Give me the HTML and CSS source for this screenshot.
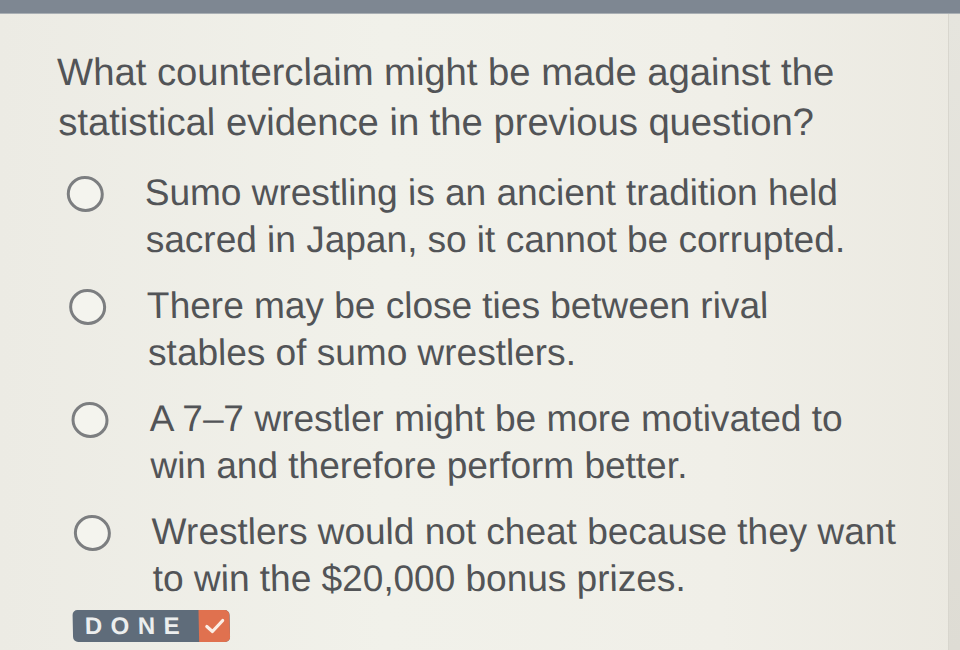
FILE: index.html
```html
<!DOCTYPE html>
<html lang="en">
<head>
<meta charset="utf-8">
<title>Counterclaim question</title>
<link rel="stylesheet" href="styles.css">
</head>
<body>
<div class="topbar"></div>
<div class="screen">
  <main class="content">
    <h1 class="question">What counterclaim might be made against the<br>statistical evidence in the previous question?</h1>
    <ul class="options">
      <li class="option"><span class="radio"></span><span class="label">Sumo wrestling is an ancient tradition held<br>sacred in Japan, so it cannot be corrupted.</span></li>
      <li class="option"><span class="radio"></span><span class="label">There may be close ties between rival<br>stables of sumo wrestlers.</span></li>
      <li class="option"><span class="radio"></span><span class="label">A 7–7 wrestler might be more motivated to<br>win and therefore perform better.</span></li>
      <li class="option"><span class="radio"></span><span class="label">Wrestlers would not cheat because they want<br>to win the $20,000 bonus prizes.</span></li>
    </ul>
    <button class="done"><span class="done-text">DONE</span><span class="check"><svg width="20" height="18" viewBox="0 0 20 18"><path d="M2 9.5 L7.5 14.5 L18 3.5" fill="none" stroke="#fbeee6" stroke-width="3.2" stroke-linecap="round" stroke-linejoin="round"/></svg></span></button>
  </main>
  <div class="edge"></div>
</div>
</body>
</html>
```
FILE: styles.css
```css
html, body {
  margin: 0;
  padding: 0;
}
body {
  width: 960px;
  height: 650px;
  overflow: hidden;
  background: linear-gradient(90deg, #ecebe4 0%, #f1f1ea 40%, #f0efe8 75%, #ebe9e1 100%);
  font-family: "Liberation Sans", Arial, sans-serif;
  color: #525457;
}
.topbar {
  height: 13px;
  background: #7e8792;
  border-bottom: 1px solid #a9afb4;
}
.screen {
  display: flex;
  height: 636px;
}
.content {
  flex: 1;
  padding: 33px 0 0 56px;
  transform: skewX(1.2deg);
  transform-origin: 0 0;
}
.question {
  margin: 0;
  font-size: 38.2px;
  font-weight: normal;
  line-height: 50px;
  white-space: nowrap;
}
.options {
  list-style: none;
  margin: 23px 0 0 0;
  padding: 0 0 0 7px;
  display: flex;
  flex-direction: column;
  gap: 20px;
}
.option {
  display: flex;
  align-items: flex-start;
  gap: 41px;
}
.radio {
  flex: none;
  width: 31px;
  height: 30px;
  margin-top: 6px;
  border: 3px solid #7c7e80;
  border-radius: 50%;
  background: #f4f4ee;
}
.label {
  font-size: 37px;
  line-height: 46.5px;
  white-space: nowrap;
}
.done {
  margin: 8px 0 0 4px;
  padding: 0;
  display: flex;
  align-items: stretch;
  height: 32px;
  border: none;
  border-radius: 5px;
  overflow: hidden;
  background: #5f6c7a;
  font-family: "Liberation Sans", Arial, sans-serif;
  cursor: pointer;
}
.done-text {
  display: flex;
  align-items: center;
  padding: 0 11px 0 12px;
  font-size: 24px;
  font-weight: bold;
  letter-spacing: 8.5px;
  color: #eceeee;
}
.check {
  width: 31px;
  display: flex;
  align-items: center;
  justify-content: center;
  background: #e0714f;
}
.edge {
  flex: none;
  width: 11px;
  background: linear-gradient(180deg, #e6e5de 0%, #dedcd4 100%);
  border-left: 1px solid #d8d6ce;
}
```
